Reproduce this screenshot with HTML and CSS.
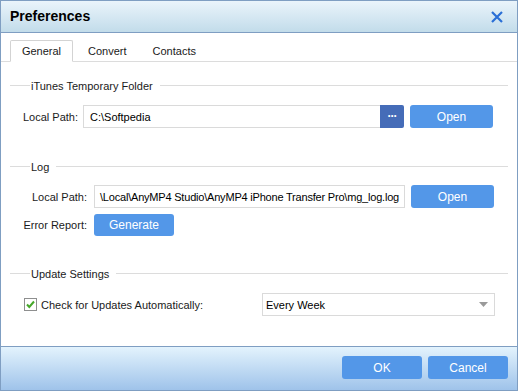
FILE: index.html
```html
<!DOCTYPE html>
<html lang="en">
<head>
  <meta charset="UTF-8">
  <title>Preferences</title>
  <link rel="stylesheet" href="styles.css">
</head>
<body>
  <div class="window">
    <div class="titlebar">
      <span class="title">Preferences</span>
      <svg class="close" width="12" height="12" viewBox="0 0 12 12">
        <path d="M1 1 L11 11 M11 1 L1 11" stroke="#2a6fd6" stroke-width="2.2" fill="none"/>
      </svg>
    </div>

    <div class="tabs">
      <div class="tab active">General</div>
      <div class="tab">Convert</div>
      <div class="tab">Contacts</div>
    </div>

    <div class="panel">
      <div class="section-head itunes"><span>iTunes Temporary Folder</span></div>
      <div class="row first">
        <label class="lbl lbl-a">Local Path:</label>
        <div class="path path-a">C:\Softpedia</div>
        <button class="browse">&middot;&middot;&middot;</button>
        <button class="btn open">Open</button>
      </div>

      <div class="section-head log"><span>Log</span></div>
      <div class="row second">
        <label class="lbl lbl-b">Local Path:</label>
        <div class="path path-b">\Local\AnyMP4 Studio\AnyMP4 iPhone Transfer Pro\mg_log.log</div>
        <button class="btn open">Open</button>
      </div>
      <div class="row third">
        <label class="lbl lbl-b">Error Report:</label>
        <button class="btn generate">Generate</button>
      </div>

      <div class="section-head update"><span>Update Settings</span></div>
      <div class="row fourth">
        <label class="check">
          <svg width="13" height="13" viewBox="0 0 13 13">
            <rect x="0.5" y="0.5" width="12" height="12" fill="#fff" stroke="#8e8f8f"/>
            <path d="M3 6.5 L5.3 9 L10 3.5" stroke="#46a82a" stroke-width="2" fill="none"/>
          </svg>
          Check for Updates Automatically:
        </label>
        <div class="select">
          <span>Every Week</span>
          <svg width="9" height="5" viewBox="0 0 9 5"><path d="M0 0 L9 0 L4.5 5 Z" fill="#9a9a9a"/></svg>
        </div>
      </div>
    </div>

    <div class="footer">
      <button class="btn foot">OK</button>
      <button class="btn foot">Cancel</button>
    </div>
  </div>
</body>
</html>
```

FILE: styles.css
```css
* {
  box-sizing: border-box;
}

body {
  margin: 0;
  padding: 0;
  background: #ffffff;
  font-family: 'Liberation Sans', Arial, sans-serif;
  font-size: 11px;
  color: #1a1a1a;
}

.window {
  width: 518px;
  height: 391px;
  border: 1px solid #7f9ec2;
  display: flex;
  flex-direction: column;
  background: #fff;
}

.titlebar {
  height: 32px;
  flex: none;
  display: flex;
  align-items: center;
  justify-content: space-between;
  padding: 0 14px 0 9px;
  background: linear-gradient(#eaf4fb, #c2dcea);
  border-bottom: 1px solid #7f9ec2;
}

.title {
  font-size: 14px;
  font-weight: bold;
  color: #000;
  padding-bottom: 1px;
}

.close {
  display: block;
}

.tabs {
  height: 29px;
  flex: none;
  display: flex;
  align-items: flex-end;
  padding-left: 9px;
  border-bottom: 1px solid #dcdcdc;
}

.tab {
  height: 22px;
  padding: 0 13px;
  display: flex;
  align-items: center;
  margin-bottom: -1px;
}

.tab.active {
  width: 63px;
  justify-content: center;
  background: #fff;
  border: 1px solid #d3d3d3;
  border-bottom: 1px solid #fff;
  border-radius: 2px 2px 0 0;
  padding: 0;
  margin-right: 2px;
}

.panel {
  flex: 1;
  display: flex;
  flex-direction: column;
  padding: 0 9px;
}

.section-head {
  display: flex;
  align-items: center;
  height: 13px;
  margin-top: 17px;
}

.section-head::before {
  content: "";
  width: 20px;
  border-top: 1px solid #dcdcdc;
}

.section-head::after {
  content: "";
  flex: 1;
  border-top: 1px solid #dcdcdc;
}

.section-head span {
  padding-right: 7px;
  margin-left: 1px;
}

.section-head.log {
  margin-top: 32px;
}

.section-head.update {
  margin-top: 31px;
}

.row {
  display: flex;
  align-items: center;
  height: 23px;
}

.row.first {
  margin-top: 13px;
}

.row.second {
  margin-top: 12px;
}

.row.third {
  margin-top: 6px;
  height: 22px;
}

.row.fourth {
  margin-top: 13px;
}

.lbl {
  white-space: nowrap;
}

.lbl-a {
  margin-left: 13px;
  width: 60px;
}

.lbl-b {
  width: 84px;
  text-align: right;
  padding-right: 7px;
}

.path {
  height: 23px;
  border: 1px solid #dadada;
  display: flex;
  align-items: center;
  padding: 0 6px;
  color: #000;
  white-space: nowrap;
  overflow: hidden;
}

.path-a {
  width: 297px;
  border-right: none;
}

.path-b {
  width: 311px;
  justify-content: flex-end;
  padding: 0 5px 0 3px;
  letter-spacing: -0.2px;
}

.browse {
  width: 24px;
  height: 23px;
  border: none;
  border-radius: 0 2px 2px 0;
  background: #456cb8;
  color: #fff;
  font-family: inherit;
  font-weight: bold;
  font-size: 12px;
  padding: 0 0 2px 0;
  letter-spacing: -1px;
}

.btn {
  height: 23px;
  border: none;
  border-radius: 3px;
  background: #5397e8;
  color: #fff;
  font-family: inherit;
  font-size: 12px;
  padding: 0;
}

.open {
  width: 83px;
  margin-left: 6px;
}

.generate {
  width: 80px;
  height: 22px;
}

.check {
  display: flex;
  align-items: center;
  gap: 4px;
  margin-left: 14px;
  width: 238px;
}

.check svg {
  display: block;
}

.select {
  width: 233px;
  height: 23px;
  border: 1px solid #dadada;
  display: flex;
  align-items: center;
  justify-content: space-between;
  padding: 0 6px 0 3px;
  color: #000;
}

.footer {
  height: 44px;
  flex: none;
  border-top: 1px solid #7f9ec2;
  background: linear-gradient(#e3f3fd, #9fc3ea);
  display: flex;
  justify-content: flex-end;
  align-items: flex-start;
  gap: 6px;
  padding: 9px 9px 0 0;
}

.foot {
  width: 80px;
}
```
